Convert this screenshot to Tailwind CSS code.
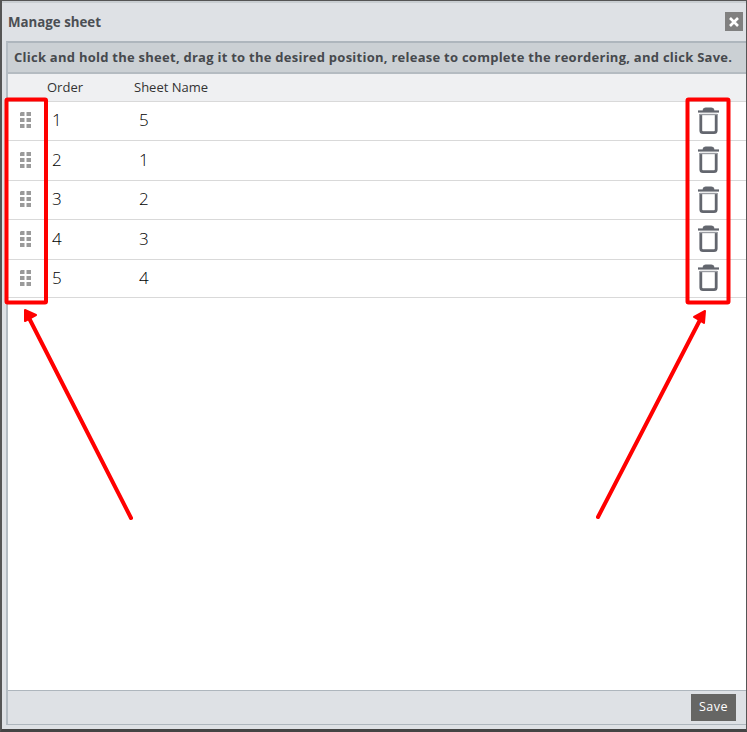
<!DOCTYPE html>
<html lang="en">
<head>
  <meta charset="UTF-8" />
  <title>Manage sheet</title>
  <script src="https://cdn.jsdelivr.net/npm/@tailwindcss/browser@4"></script>
</head>
<body class="bg-[#e3e5e8] font-['Open_Sans',sans-serif]">
  <div class="relative w-[747px] h-[732px] overflow-hidden flex flex-col bg-[#dee1e5] border-t-1 border-l-2 border-r-1 border-b-3 border-t-[#555] border-l-[#555] border-r-[#555] border-b-[#444]">
    <!-- Title bar -->
    <div class="h-[40px] shrink-0 flex items-center justify-between pl-[6px] pr-[3px] border-t-2 border-[#c9ced2]">
      <span class="text-[13.3px] font-bold text-[#4b4f54] mt-[1px]">Manage sheet</span>
      <span class="w-[18px] h-[19px] mb-[1px] bg-[#808080] flex items-center justify-center">
        <svg width="12" height="12" viewBox="0 0 12 12"><path d="M2 2 L10 10 M10 2 L2 10" stroke="#fff" stroke-width="2.6" /></svg>
      </span>
    </div>

    <!-- Dialog body -->
    <div class="flex-1 ml-[4px] mb-[4px] flex flex-col border-2 border-b-1 border-[#aeb6bd] border-l-[#b4bcc3] border-r-0 min-h-0 border-b-[#aeb6bd]">
      <div class="h-[31px] shrink-0 flex items-center pl-[6px] bg-[#cbd0d4] border-b-2 border-[#b4bbc1] text-[13px] font-bold text-[#46494d] whitespace-nowrap tracking-[0.255px]">
        Click and hold the sheet, drag it to the desired position, release to complete the reordering, and click Save.
      </div>
      <div class="h-[28px] shrink-0 flex items-center bg-[#eff0f2] border-b border-[#d9d9d9] text-[13px] text-[#333]">
        <span class="w-[126px] pl-[39px]">Order</span>
        <span>Sheet Name</span>
      </div>

      <div class="flex-1 bg-white min-h-0">
        <div class="h-[39px] pb-[2px] flex items-center border-b border-[#d9d9d9] text-[17px] font-light text-black">
          <span class="w-[44px] pl-[12px]">
            <svg class="block" width="11" height="16" viewBox="0 0 11 16" fill="#9a9a9a"><path d="M1 0 H4.5 V4 H0 V1 Z"/><rect x="6.5" y="0" width="4.5" height="4"/><rect x="0" y="6" width="4.5" height="4"/><rect x="6.5" y="6" width="4.5" height="4"/><rect x="0" y="12" width="4.5" height="4"/><rect x="6.5" y="12" width="4.5" height="4"/></svg>
          </span>
          <span class="w-[87px]">1</span>
          <span class="flex-1">5</span>
          <svg class="mr-[27px]" width="21" height="27" viewBox="0 0 21 27" fill="none" stroke="#63666e"><path d="M0 4.5 H21" stroke-width="2.2"/><path d="M5 3.5 Q5 1 7.5 1 H13.5 Q16 1 16 3.5 Z" fill="#63666e" stroke-width="1"/><path d="M2.8 7 V23.5 Q2.8 25.6 5 25.6 H16 Q18.2 25.6 18.2 23.5 V7" stroke-width="2.8"/><path d="M2 7.5 H19" stroke-width="1.4" stroke="#9a9ca2"/></svg>
        </div>
        <div class="h-[40px] pb-[2px] flex items-center border-b border-[#d9d9d9] text-[17px] font-light text-black">
          <span class="w-[44px] pl-[12px]">
            <svg class="block" width="11" height="16" viewBox="0 0 11 16" fill="#9a9a9a"><path d="M1 0 H4.5 V4 H0 V1 Z"/><rect x="6.5" y="0" width="4.5" height="4"/><rect x="0" y="6" width="4.5" height="4"/><rect x="6.5" y="6" width="4.5" height="4"/><rect x="0" y="12" width="4.5" height="4"/><rect x="6.5" y="12" width="4.5" height="4"/></svg>
          </span>
          <span class="w-[87px]">2</span>
          <span class="flex-1">1</span>
          <svg class="mr-[27px]" width="21" height="27" viewBox="0 0 21 27" fill="none" stroke="#63666e"><path d="M0 4.5 H21" stroke-width="2.2"/><path d="M5 3.5 Q5 1 7.5 1 H13.5 Q16 1 16 3.5 Z" fill="#63666e" stroke-width="1"/><path d="M2.8 7 V23.5 Q2.8 25.6 5 25.6 H16 Q18.2 25.6 18.2 23.5 V7" stroke-width="2.8"/><path d="M2 7.5 H19" stroke-width="1.4" stroke="#9a9ca2"/></svg>
        </div>
        <div class="h-[39px] pb-[2px] flex items-center border-b border-[#d9d9d9] text-[17px] font-light text-black">
          <span class="w-[44px] pl-[12px]">
            <svg class="block" width="11" height="16" viewBox="0 0 11 16" fill="#9a9a9a"><path d="M1 0 H4.5 V4 H0 V1 Z"/><rect x="6.5" y="0" width="4.5" height="4"/><rect x="0" y="6" width="4.5" height="4"/><rect x="6.5" y="6" width="4.5" height="4"/><rect x="0" y="12" width="4.5" height="4"/><rect x="6.5" y="12" width="4.5" height="4"/></svg>
          </span>
          <span class="w-[87px]">3</span>
          <span class="flex-1">2</span>
          <svg class="mr-[27px]" width="21" height="27" viewBox="0 0 21 27" fill="none" stroke="#63666e"><path d="M0 4.5 H21" stroke-width="2.2"/><path d="M5 3.5 Q5 1 7.5 1 H13.5 Q16 1 16 3.5 Z" fill="#63666e" stroke-width="1"/><path d="M2.8 7 V23.5 Q2.8 25.6 5 25.6 H16 Q18.2 25.6 18.2 23.5 V7" stroke-width="2.8"/><path d="M2 7.5 H19" stroke-width="1.4" stroke="#9a9ca2"/></svg>
        </div>
        <div class="h-[40px] pb-[2px] flex items-center border-b border-[#d9d9d9] text-[17px] font-light text-black">
          <span class="w-[44px] pl-[12px]">
            <svg class="block" width="11" height="16" viewBox="0 0 11 16" fill="#9a9a9a"><path d="M1 0 H4.5 V4 H0 V1 Z"/><rect x="6.5" y="0" width="4.5" height="4"/><rect x="0" y="6" width="4.5" height="4"/><rect x="6.5" y="6" width="4.5" height="4"/><rect x="0" y="12" width="4.5" height="4"/><rect x="6.5" y="12" width="4.5" height="4"/></svg>
          </span>
          <span class="w-[87px]">4</span>
          <span class="flex-1">3</span>
          <svg class="mr-[27px]" width="21" height="27" viewBox="0 0 21 27" fill="none" stroke="#63666e"><path d="M0 4.5 H21" stroke-width="2.2"/><path d="M5 3.5 Q5 1 7.5 1 H13.5 Q16 1 16 3.5 Z" fill="#63666e" stroke-width="1"/><path d="M2.8 7 V23.5 Q2.8 25.6 5 25.6 H16 Q18.2 25.6 18.2 23.5 V7" stroke-width="2.8"/><path d="M2 7.5 H19" stroke-width="1.4" stroke="#9a9ca2"/></svg>
        </div>
        <div class="h-[38px] pb-[2px] flex items-center border-b border-[#d9d9d9] text-[17px] font-light text-black">
          <span class="w-[44px] pl-[12px]">
            <svg class="block" width="11" height="16" viewBox="0 0 11 16" fill="#9a9a9a"><path d="M1 0 H4.5 V4 H0 V1 Z"/><rect x="6.5" y="0" width="4.5" height="4"/><rect x="0" y="6" width="4.5" height="4"/><rect x="6.5" y="6" width="4.5" height="4"/><rect x="0" y="12" width="4.5" height="4"/><rect x="6.5" y="12" width="4.5" height="4"/></svg>
          </span>
          <span class="w-[87px]">5</span>
          <span class="flex-1">4</span>
          <svg class="mr-[27px]" width="21" height="27" viewBox="0 0 21 27" fill="none" stroke="#63666e"><path d="M0 4.5 H21" stroke-width="2.2"/><path d="M5 3.5 Q5 1 7.5 1 H13.5 Q16 1 16 3.5 Z" fill="#63666e" stroke-width="1"/><path d="M2.8 7 V23.5 Q2.8 25.6 5 25.6 H16 Q18.2 25.6 18.2 23.5 V7" stroke-width="2.8"/><path d="M2 7.5 H19" stroke-width="1.4" stroke="#9a9ca2"/></svg>
        </div>
      </div>

      <!-- Footer -->
      <div class="h-[34px] shrink-0 flex items-center justify-end pr-[10px] bg-[#dee1e5] border-t border-[#aeb6bd]">
        <button class="w-[45px] h-[27px] bg-[#666664] text-white text-[12.5px] tracking-[0.5px]">Save</button>
      </div>
    </div>

    <!-- Red annotations drawn over the dialog -->
    <svg class="absolute left-[-2px] top-[-1px]" width="747" height="732" viewBox="0 0 747 732" fill="none" stroke="#ff0000">
      <rect x="6.5" y="99.5" width="39.5" height="203" rx="1" stroke-width="4"/>
      <rect x="687.5" y="99.5" width="41" height="203" rx="1" stroke-width="4"/>
      <path d="M131 518 L28 316" stroke-width="4" stroke-linecap="round"/>
      <path d="M25 310 L36 315 L25 321 Z" fill="#ff0000" stroke-width="2" stroke-linejoin="round"/>
      <path d="M598 517 L701 318" stroke-width="4" stroke-linecap="round"/>
      <path d="M705 311 L704 323 L694 317 Z" fill="#ff0000" stroke-width="2" stroke-linejoin="round"/>
    </svg>
  </div>
</body>
</html>
